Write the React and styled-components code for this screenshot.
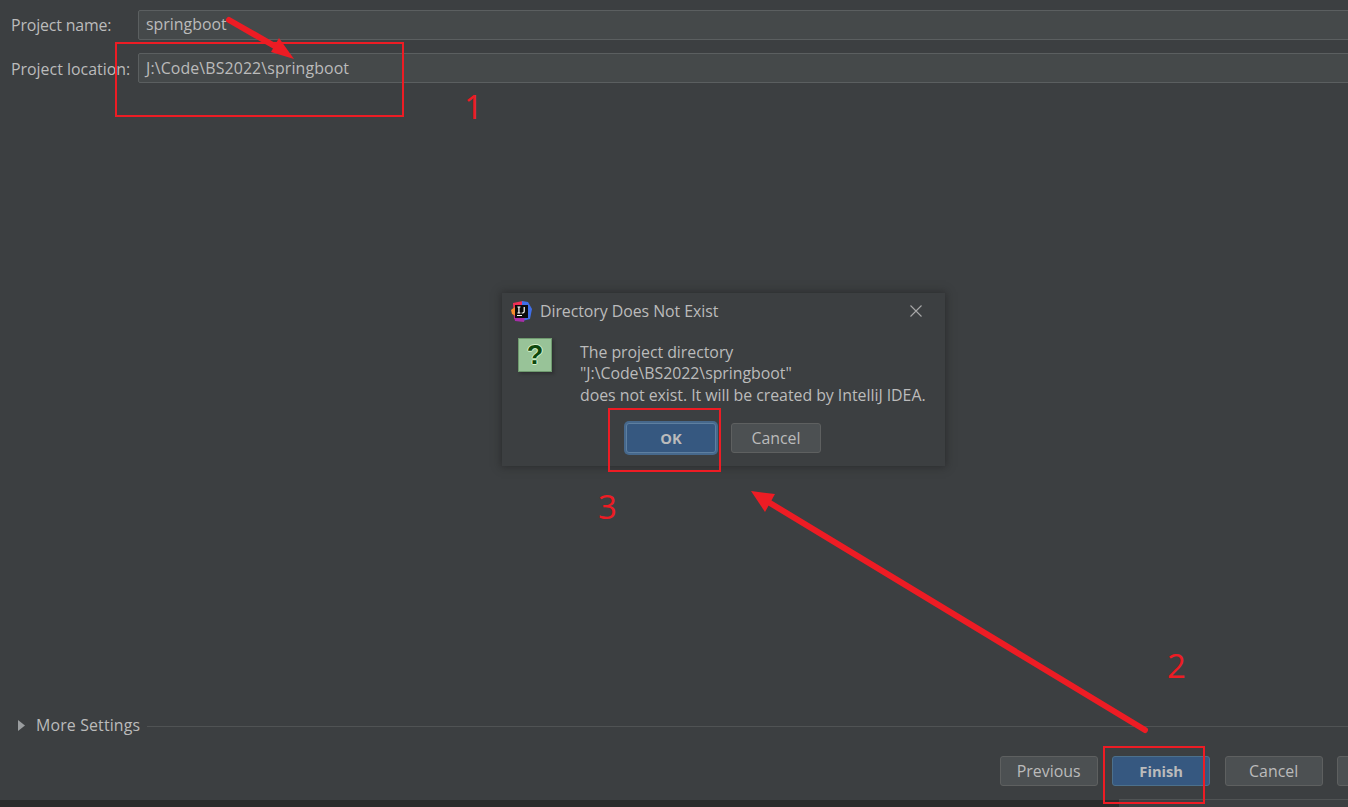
import React from "react";
import styled, { createGlobalStyle } from "styled-components";

const Global = createGlobalStyle`
  html, body { margin: 0; padding: 0; background: #3c3f41; }
  #root { width: 1348px; height: 807px; overflow: hidden; }
`;

const Page = styled.div`
  position: relative;
  width: 1348px;
  height: 807px;
  overflow: hidden;
  display: flex;
  flex-direction: column;
  background: #3c3f41;
  color: #bbbbbb;
  font-family: "Open Sans", "Noto Sans", sans-serif;
  font-size: 15.9px;
`;

const Form = styled.div`
  flex: 1;
  display: flex;
  flex-direction: column;
  gap: 13px;
  padding: 10px 0 0 11px;
`;

const FieldRow = styled.div`
  display: flex;
  align-items: center;
  height: 30px;
`;

const FieldLabel = styled.div`
  width: 127px;
  flex: none;
  white-space: nowrap;
  margin-top: ${(p) => (p.$low ? "1px" : "-1px")};
  letter-spacing: ${(p) => (p.$low ? "0" : "-0.15px")};
`;

const TextField = styled.div`
  flex: 1;
  height: 30px;
  box-sizing: border-box;
  margin-right: -6px;
  padding: 0 0 ${(p) => (p.$low ? "0" : "2px")} 7px;
  display: flex;
  align-items: center;
  background: #45494a;
  border: 1px solid #5b5f60;
  border-radius: 2px;
  letter-spacing: ${(p) => (p.$low ? "0.12px" : "0")};
`;

const MoreRow = styled.div`
  display: flex;
  align-items: center;
  height: 20px;
  padding-left: 18px;
  margin-bottom: 21px;
`;

const Caret = styled.svg`
  width: 7px;
  height: 11px;
  flex: none;
  margin-right: 11px;
`;

const MoreLabel = styled.span`
  white-space: nowrap;
  margin-right: 7px;
  letter-spacing: 0.15px;
`;

const Rule = styled.div`
  flex: 1;
  height: 1px;
  background: #505354;
  margin-top: 2px;
`;

const ButtonBar = styled.div`
  display: flex;
  justify-content: flex-end;
  gap: 14.5px;
  height: 30px;
  margin-right: -87.2px;
  margin-bottom: 13px;
`;

const Button = styled.button`
  width: 98px;
  height: 30px;
  flex: none;
  box-sizing: border-box;
  padding: 0;
  border-radius: 3px;
  font: inherit;
  color: #bbbbbb;
  background: ${(p) => (p.$primary ? "#365880" : "#4c5052")};
  border: 1px solid ${(p) => (p.$primary ? "#4c708c" : "#5e6060")};
  font-weight: ${(p) => (p.$primary ? 700 : 400)};
  font-size: ${(p) => (p.$primary ? "14.7px" : "15.9px")};
`;

const BottomStrip = styled.div`
  height: 8px;
  flex: none;
  display: flex;
`;

const StripDark = styled.div`
  width: 1119px;
  margin-top: 1px;
  background: #2b2b2b;
`;

const StripLight = styled.div`
  flex: 1;
  border-top: 1px solid #505354;
`;

const Dialog = styled.div`
  position: absolute;
  left: 502px;
  top: 293px;
  width: 443px;
  height: 173px;
  box-sizing: border-box;
  display: flex;
  flex-direction: column;
  background: #3c3f41;
  box-shadow: 0 0 8px 1px rgba(30, 30, 30, 0.55);
`;

const TitleBar = styled.div`
  display: flex;
  align-items: center;
  height: 36px;
  padding: 0 23px 0 9px;
  flex: none;
`;

const TitleText = styled.div`
  flex: 1;
  margin: 0 0 1px 8px;
  white-space: nowrap;
  letter-spacing: -0.06px;
`;

const DialogBody = styled.div`
  display: flex;
  padding: 9px 0 0 16px;
`;

const QuestionBox = styled.div`
  width: 34px;
  height: 34px;
  flex: none;
  box-sizing: border-box;
  display: flex;
  align-items: center;
  justify-content: center;
  background: #98c398;
  border: 1px solid #6f9a6f;
  box-shadow: 2px 2px 3px rgba(20, 20, 20, 0.35);
  color: #0d470d;
  font-family: "Liberation Sans", sans-serif;
  font-weight: 700;
  font-size: 27px;
  text-shadow: 1px 0 0 #d3f2c8, -1px 0 0 #d3f2c8, 0 1px 0 #d3f2c8, 0 -1px 0 #d3f2c8;
`;

const Message = styled.div`
  margin: 4px 0 0 28px;
  line-height: 21.3px;
  white-space: nowrap;
  letter-spacing: -0.04px;
`;

const DialogButtons = styled.div`
  display: flex;
  gap: 15px;
  padding: 17px 0 0 124px;
  align-items: center;
`;

const OkButton = styled(Button)`
  width: 90px;
  height: 30px;
  background: #365880;
  border: 1px solid #5e7fa0;
  box-shadow: 0 0 0 2px #46688c;
  font-weight: 700;
  font-size: 14.7px;
`;

const CancelButton = styled(Button)`
  width: 90px;
`;

const Overlay = styled.svg`
  position: absolute;
  left: 0;
  top: 0;
  pointer-events: none;
`;

const Marker = styled.div`
  position: absolute;
  left: ${(p) => p.$x}px;
  top: ${(p) => p.$y}px;
  width: ${(p) => p.$w}px;
  height: ${(p) => p.$h}px;
  box-sizing: border-box;
  border: 2px solid #ed1c24;
`;

const Step = styled.div`
  position: absolute;
  left: ${(p) => p.$x}px;
  top: ${(p) => p.$y}px;
  color: #ed1c24;
  font-family: "Open Sans", sans-serif;
  font-weight: 400;
  font-size: 33px;
  line-height: 40px;
`;

const IdeaLogo = () => (
  <svg width="21" height="21" viewBox="0 0 21 21">
    <path d="M2 2 L12 0 L9 19 L3 18 Z" fill="#ef2f55" />
    <path d="M0 9 L4 6 L5 15 L1 13 Z" fill="#f58a2c" />
    <path d="M11 0 L17 1 L21 8 L19 18 L11 20 Z" fill="#3f6ee8" />
    <path d="M3 15 L14 15 L13 21 L4 20 Z" fill="#a62fa8" />
    <rect x="4" y="4" width="13" height="13" fill="#0b0b0b" />
    <rect x="6" y="14" width="5" height="1" fill="#ffffff" />
    <path d="M6.4 6 H9.4 M7.9 6 V12 M6.4 12 H9.4 M13.2 6 V10.6 Q13.2 12 11.6 12 H10.6" stroke="#ffffff" strokeWidth="1.2" fill="none" />
  </svg>
);

const CloseIcon = () => (
  <svg width="12" height="12" viewBox="0 0 12 12">
    <path d="M0.5 0.5 L11.5 11.5 M11.5 0.5 L0.5 11.5" stroke="#a8a8a8" strokeWidth="1.1" />
  </svg>
);

export default function App() {
  return (
    <Page>
      <Global />
      <Form>
        <FieldRow>
          <FieldLabel>Project name:</FieldLabel>
          <TextField>springboot</TextField>
        </FieldRow>
        <FieldRow>
          <FieldLabel $low>Project location:</FieldLabel>
          <TextField $low>J:\Code\BS2022\springboot</TextField>
        </FieldRow>
      </Form>

      <MoreRow>
        <Caret viewBox="0 0 7 11">
          <path d="M0 0 L7 5.5 L0 11 Z" fill="#9a9d9f" />
        </Caret>
        <MoreLabel>More Settings</MoreLabel>
        <Rule />
      </MoreRow>

      <ButtonBar>
        <Button>Previous</Button>
        <Button $primary>Finish</Button>
        <Button>Cancel</Button>
        <Button />
      </ButtonBar>

      <BottomStrip>
        <StripDark />
        <StripLight />
      </BottomStrip>

      <Dialog>
        <TitleBar>
          <IdeaLogo />
          <TitleText>Directory Does Not Exist</TitleText>
          <CloseIcon />
        </TitleBar>
        <DialogBody>
          <QuestionBox>?</QuestionBox>
          <Message>
            The project directory
            <br />
            "J:\Code\BS2022\springboot"
            <br />
            does not exist. It will be created by IntelliJ IDEA.
          </Message>
        </DialogBody>
        <DialogButtons>
          <OkButton>OK</OkButton>
          <CancelButton>Cancel</CancelButton>
        </DialogButtons>
      </Dialog>

      <Marker $x={115} $y={42} $w={289} $h={75} />
      <Marker $x={608} $y={408} $w={113} $h={64} />
      <Marker $x={1103} $y={746} $w={102} $h={58} />

      <Overlay width="1348" height="807" viewBox="0 0 1348 807">
        <path d="M229 20 L278 48" stroke="#ed1c24" strokeWidth="6" strokeLinecap="round" />
        <path d="M294 59 L279 38 L271 52 Z" fill="#ed1c24" />
        <path d="M1145 730 L765 500" stroke="#ed1c24" strokeWidth="6" strokeLinecap="round" />
        <path d="M751 491 L775 494 L765 512 Z" fill="#ed1c24" />
      </Overlay>

      <Step $x={464} $y={87}>1</Step>
      <Step $x={1167} $y={646}>2</Step>
      <Step $x={598} $y={487}>3</Step>
    </Page>
  );
}
